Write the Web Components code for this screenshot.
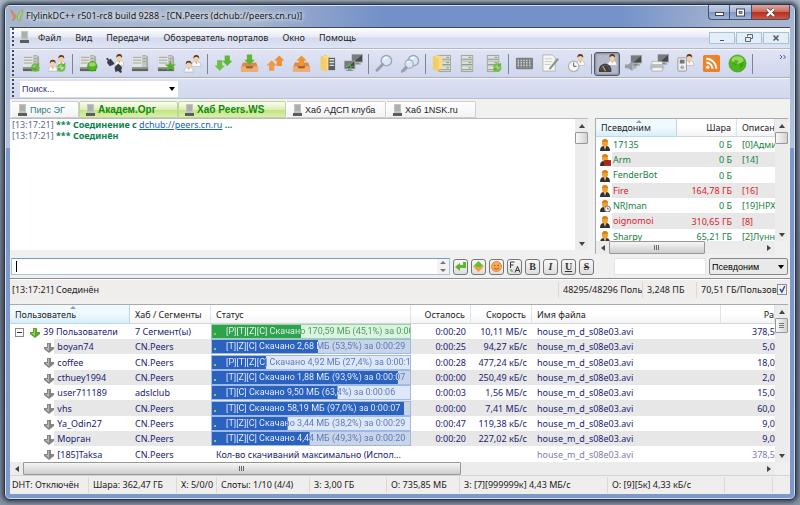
<!DOCTYPE html>
<html lang="ru"><head><meta charset="utf-8"><title>FlylinkDC++</title>
<style>
html,body{margin:0;height:100%}
body{font:9px/12px "Noto Sans",sans-serif;color:#1c1c1c;background:linear-gradient(#aab8c8,#8d99a8 25%,#6f7a8c 60%,#8391a6);overflow:hidden}
</style></head><body>
<app-window>
  <title-bar>FlylinkDC++ r501-rc8 build 9288 - [CN.Peers (dchub://peers.cn.ru)]</title-bar>
  <menu-bar></menu-bar>
  <tool-bar></tool-bar>
  <search-bar></search-bar>
  <tab-strip>
    <hub-tab style="--w:68px;--c:#2b7f8c">Пирс ЭГ</hub-tab>
    <hub-tab unread style="--w:99px">Академ.Орг</hub-tab>
    <hub-tab unread style="--w:108px">Хаб Peers.WS</hub-tab>
    <hub-tab style="--w:100px">Хаб АДСП клуба</hub-tab>
    <hub-tab style="--w:90px">Хаб 1NSK.ru</hub-tab>
  </tab-strip>
  <hub-view><chat-log></chat-log><user-list></user-list></hub-view>
  <message-bar></message-bar>
  <status-bar class="hub" cols="1fr 84px 54px 94px">
    <span>[13:17:21] Соединён</span><span>48295/48296 Поль</span><span>3,248 ПБ</span><span>70,51 ГБ/Пользов<input type="checkbox" checked aria-label="Показать пользователей"></span>
  </status-bar>
  <transfer-list></transfer-list>
  <status-bar cols="78px 88px 40px 93px 77px 73px 148px 117px 48px 1fr">
    <span>DHT: Отключён</span><span>Шара: 362,47 ГБ</span><span>Х: 5/0/0</span><span>Слоты: 1/10 (4/4)</span><span>З: 3,00 ГБ</span><span>О: 735,85 МБ</span><span>З: [7][999999к] 4,43 МБ/с</span><span>О: [9][5к] 4,33 кБ/с</span><span></span><span></span>
  </status-bar>
</app-window>
<script>
const server='<path d="M1 1h14l3 2v13H1z" fill="#a9aca9"/><path d="M1 1h11v14H1z" fill="#e3e5e2"/><path d="M2 3.500h9M2 6.500h9M2 9.500h9" stroke="#9da29d"/><path d="M12 2h4v12h-4z" fill="#c4c7c4"/><path d="M13 5h2M13 8h2" stroke="#8d918d"/><path d="M1 14h17v4H1z" fill="#5f645f"/><path d="M1 14h17v1.500H1z" fill="#9da19d"/>';
const head=(x,y)=>`<g transform="translate(${x} ${y})"><path d="M0 12q0-4 3-5h4q3 1 3 5z" fill="#fafafa" stroke="#aaa" stroke-width=".6"/><path d="M4 6h2v2l-1 2-1-2z" fill="#e2a878"/><ellipse cx="5" cy="4" rx="2.600" ry="3.400" fill="#f6cfa6"/><path d="M2 4Q1.500 0 5 0t3 4Q7 2 5 2T2 4z" fill="#5d3a20"/></g>`;
const refresh=(x,y)=>`<g transform="translate(${x} ${y})" fill="none" stroke="#6cc238" stroke-width="2.200"><path d="M1.500 5a3.500 3.500 0 0 1 6-2M8.500 5a3.500 3.500 0 0 1-6 2.500"/><path d="M9 0v4.500H4.500zM1 10V5.500h4.500z" fill="#5db62c" stroke="none"/></g>`;
const ball=(x,y,r)=>`<circle cx="${x}" cy="${y}" r="${r}" fill="#4fb51c" stroke="#389010" stroke-width=".6"/><ellipse cx="${x}" cy="${y-r*.4}" rx="${r*.7}" ry="${r*.45}" fill="#a8e36c" opacity=".8"/>`;
const screen=(x,y)=>`<g transform="translate(${x} ${y})"><path d="M0 0h12v9H0z" fill="#a5a8aa"/><path d="M1 1h10v7H1z" fill="#45494b"/><path d="M1 1h10L3 8H1z" fill="#777c7e"/><path d="M4 9h4v1h2v1H2v-1h2z" fill="#85898b"/></g>`;
const arrow=(x,y,c,s=1,up=1)=>`<path transform="translate(${x} ${y}) scale(${s} ${s*up})" d="M0-5l5 5H2.500v5h-5V0H-5z" fill="${c}"/>`;
const folder='<path d="M1 3l6-2v17l-6-2z" fill="#e6b94c"/><path d="M3 2h8v14H3z" fill="#f6dc86"/><path d="M1 3l6 2v14l-6-3z" fill="#f3cd69"/>';
const rack='<path d="M3 1h13v18H3z" fill="#a3a8a3"/><path d="M4 2h11v5H4zM4 8h11v4H4zM4 13h11v5H4z" fill="#dee1dd"/><path d="M4 5.500h11M4 11h11M4 16.500h11" stroke="#8b918b"/><path d="M11 3.500h3M11 9h3M11 14.500h3" stroke="#6cae4c"/>';
const tray='<path d="M3 9h14l2 5v4H1v-4z" fill="#d98b4c"/><path d="M1 13h5l1 2h6l1-2h5v6H1z" fill="#ecae78"/><path d="M6 13h8l-1 2H7z" fill="#9e5a27"/>';
const lens='<circle cx="12" cy="7" r="5.500" fill="#d6e7f5" stroke="#9aa8b4" stroke-width="1.500"/><path d="M9 6q1-3 4-2" stroke="#fff" stroke-width="1.500" fill="none"/><path d="M8 11l-6 6" stroke="#9a9da4" stroke-width="3" stroke-linecap="round"/>';
const person='<path d="M1 12q0-5 4-5h2q4 0 4 5z" fill="#33302e"/><path d="M5 7h2l-1 4z" fill="#fff"/><ellipse cx="6" cy="4" rx="3" ry="3.800" fill="#f0a030"/><path d="M3 3Q3 0 6 0t3 3z" fill="#d9801c"/>';
const ICONS={
 logo:[14,13,'<path d="M6 7Q0-1 1 2t3 6Q2 12 3 12t3-5z" fill="#f0985a" stroke="#b97040" stroke-width=".6"/><path d="M7 7q6-8 6-5t-3 6q2 4 0 4T7 7z" fill="#a8d66e" stroke="#69a03e" stroke-width=".6"/>'],
 doc:[9,12,'<path d="M1 0h7v9H1z" fill="#c3c5c3"/><path d="M2 2h5M2 4h5M2 6h5" stroke="#8d908d" stroke-width=".8"/><path d="M0 9h9v3H0z" fill="#5a5e5a"/>'],
 srvRef:[20,20,server+refresh(9,9)],
 usrRef:[20,20,head(9,1)+head(0,6)+refresh(9,9)],
 srvBall:[20,20,server+ball(14,13,5)],
 plug:[20,20,head(10,0)+'<g fill="#3a3e44"><path d="M1 5l2-1 1 2 2-1 4 5-1 1-4 2-3-4 1-2z"/><path d="M10 14l4-4 4 4-1 3 1 2-2 1-2-2-3 1z"/></g>'],
 srv:[20,20,server],
 srvStar:[20,20,server+'<path d="M14 7l1.500 4H20l-3.500 2.500L18 18l-4-2.500L10 18l1.500-4.500L8 11h4.500z" fill="#55b026"/>'],
 users:[20,20,head(9,1)+head(1,7)],
 downs:[20,20,arrow(6,12,'#6cc043',1.1,-1)+arrow(14,7,'#5fb638',1.1,-1)],
 trayDown:[20,20,tray+arrow(10,6,'#5eb533',1.1,-1)],
 ups:[20,20,arrow(6,12,'#ee9a48',1.1)+arrow(14,7,'#f0912f',1.1)],
 trayUp:[20,20,tray+arrow(10,7,'#f0942f',1.1)],
 door:[20,20,'<g transform="translate(2)">'+folder+'<path d="M9 4h7v13H9z" fill="#5b5e60"/><path d="M10 6h5M10 9h5M10 12h5" stroke="#d8dada" stroke-width="1.500"/></g>'],
 monitors:[20,20,screen(8,0)+screen(0,7)+'<path d="M2 13h3l1-3 1 5 1-2h3" stroke="#50c850" fill="none" stroke-width=".8"/>'],
 find:[20,20,lens],
 find2:[20,20,'<g transform="translate(1 0)">'+lens+'</g><g transform="translate(-1 5) scale(.8)">'+lens+'</g>'],
 folderRack:[20,20,'<g transform="translate(4 0)">'+rack+'</g>'+folder],
 rack:[20,20,rack],
 rackRef:[20,20,rack+refresh(9,9)],
 keys:[20,20,'<rect x="1" y="4" width="18" height="12" rx="1" fill="#7c8083"/><path d="M3.500 6v8M6.500 6v8M9.500 6v8M12.500 6v8M15.500 6v8" stroke="#cfd2d4" stroke-width="1.500" stroke-dasharray="1.500 1"/>'],
 note:[20,20,'<path d="M2 1h10l3 3v14H2z" fill="#f7f7f5" stroke="#b3b5b3"/><path d="M4 5h8M4 8h8M4 11h6" stroke="#c5c8c6"/><path d="M18 5L9 16" stroke="#8c9092" stroke-width="2.200"/>'],
 clock:[20,20,head(9,0)+'<circle cx="7" cy="13" r="5.500" fill="#f6f6f6" stroke="#b3b3b3" stroke-width="1.300"/><path d="M7 9v4h3" stroke="#555" fill="none"/>'],
 gauge:[20,20,head(10,0)+'<path d="M1 19q-1-8 6.500-9 7.500 1 6.500 9z" fill="#3c3f44"/><path d="M3 17q0-5 4.500-5t4.500 5" stroke="#5b5f65" fill="none"/><path d="M8 18l-3-5" stroke="#e29a3a" stroke-width="1.300"/>'],
 speaker:[20,20,screen(7,1)+'<path d="M1 11h3l5-3v10l-5-3H1z" fill="#9a9ea1"/><path d="M10.500 10v6M12.500 11v4" stroke="#80858a"/>'],
 printer:[20,20,screen(8,0)+'<path d="M2 8h11v3H2z" fill="#f8f8f8" stroke="#999" stroke-width=".6"/><path d="M0 11h15v5H0z" fill="#bcc0c2"/><path d="M2 14h11v4H2z" fill="#f2f2f2" stroke="#999" stroke-width=".6"/>'],
 player:[20,20,head(9,0)+'<rect x="2" y="4" width="9" height="14" rx="1" fill="#eee" stroke="#999"/><path d="M4 6h5v4H4z" fill="#6f7477"/><circle cx="6.500" cy="14" r="2" fill="#aeb1b3"/>'],
 rss:[20,20,'<rect x="1" y="1" width="18" height="18" rx="2" fill="#ee8325"/><circle cx="6" cy="14" r="1.800" fill="#fff"/><path d="M4.500 9a6.500 6.500 0 0 1 6.500 6.500M4.500 5a10.500 10.500 0 0 1 10.500 10.500" stroke="#fff" stroke-width="2" fill="none"/>'],
 globe:[20,20,ball(10,10,9)+'<path d="M5 9l3-3 3 1-1 3-3 2zM12 10l4-2v4l-3 3z" fill="#35960f" opacity=".6"/>'],
 person:[12,12,person],
 personRed:[12,12,person+'<path d="M5 6h7v6H5z" fill="#b8322a"/><path d="M5 8h7M5 10h7M8 6v2M9 8v2" stroke="#842019" stroke-width=".6"/>'],
 personClock:[12,12,person+'<circle cx="8.500" cy="9" r="3" fill="#eee" stroke="#777"/><path d="M8.500 7.500V9H10" stroke="#444" fill="none" stroke-width=".7"/>'],
 down:[10,10,'<path d="M3 0h4v4h3v2l-5 4-5-4V4h3z" fill="#5ba52a"/><path d="M4 1h1v7L1.500 5H4z" fill="#9bd45d"/>'],
 downGrey:[10,10,'<path d="M3 0h4v4h3v2l-5 4-5-4V4h3z" fill="#858585"/><path d="M4 1h1v7L1.500 5H4z" fill="#b9b9b9"/>'],
 enter:[11,11,'<path d="M8 1h3v6H5v3L0 6l5-4v2h3z" fill="#5fb52c"/>'],
 updown:[11,11,'<path d="M5.500 0L11 5.500H0z" fill="#69bd35"/><path d="M5.500 11L11 5.500H0z" fill="#f0a040"/><path d="M3 4h5v2H3z" fill="#69bd35"/>'],
 smile:[11,11,'<circle cx="5.500" cy="5.500" r="5" fill="#f6ac5c" stroke="#e28a34"/><circle cx="3.800" cy="4.500" r=".8" fill="#a85a1c"/><circle cx="7.200" cy="4.500" r=".8" fill="#a85a1c"/><path d="M3 7q2.500 2.500 5 0" stroke="#a85a1c" fill="none"/>']
};
const define=(name,html,setup)=>{const t=document.createElement('template');t.innerHTML=html;
 customElements.define(name,class extends HTMLElement{constructor(){super();this.attachShadow({mode:'open'})}
 connectedCallback(){if(this.ready)return;this.ready=1;this.shadowRoot.append(t.content.cloneNode(true));setup&&setup(this,this.shadowRoot)}})};

define('app-icon','<style>:host{display:inline-block;vertical-align:middle;line-height:0;flex:none}</style>',(el,r)=>{
 const [w,h,p]=ICONS[el.getAttribute('name')];const s=el.getAttribute('size')||w;
 r.innerHTML+=`<svg aria-hidden="true" width="${s}" height="${Math.round(h*s/w)}" viewBox="0 0 ${w} ${h}">${p}</svg>`});

define('app-window',`<style>:host{box-sizing:border-box;display:block;height:100vh;padding:4px 4px 5px}
 .frame{box-sizing:border-box;height:100%;display:flex;flex-direction:column;border:1px solid #25344f;border-radius:6px;padding:0 5px 5px;
 background:linear-gradient(90deg,transparent 30%,#7390c9 48%,#7592ca 78%,transparent 92%) top/100% 23px no-repeat,linear-gradient(#a5b4cc,#b3c3dd 29%,#7d98cb 29%);box-shadow:inset 0 0 0 1px #d5dfee,0 0 4px 2px #39414f}
 .client{flex:1;min-height:0;display:flex;flex-direction:column;background:#f0f0f0;border-top:1px solid #3b4863}
 ::slotted(title-bar){flex:none}</style>
 <div class="frame"><slot name="title"></slot><div class="client"><slot></slot></div></div>`,el=>{el.querySelector('title-bar').slot='title'});

define('title-bar',`<style>:host{display:flex;height:22px;align-items:flex-start;color:#101820}
 app-icon{margin:4px 2px 0 0} h1{flex:1;margin:5px 0 0;font:inherit;text-shadow:0 0 5px #fff,0 0 6px #fff}
 .b{display:flex} button{box-sizing:border-box;width:22px;height:15px;padding:0;border:1px solid #3f5270;border-top:0;border-left-width:0;background:linear-gradient(#c5d1e6,#a8b8d6 48%,#8097c2 50%,#a1b5d9);display:grid;place-items:center}
 button:first-child{border-left-width:1px;border-radius:0 0 0 4px} button:last-child{width:38px;border-radius:0 0 4px;background:linear-gradient(#dfa79e,#cc6a5c 48%,#b32f1e 50%,#d0553d)}</style>
 <app-icon name="logo"></app-icon><h1><slot></slot></h1><div class="b">
 <button aria-label="Свернуть"><svg width="11" height="9"><rect x="1.500" y="4.500" width="8" height="3" fill="#fff" stroke="#445"/></svg></button>
 <button aria-label="Развернуть"><svg width="11" height="9"><rect x="1.500" y="1" width="8" height="7" fill="#fff" stroke="#445"/><rect x="4" y="3.500" width="3" height="2" fill="#8fa2c8" stroke="#445" stroke-width=".7"/></svg></button>
 <button aria-label="Закрыть"><svg width="11" height="9"><path d="M2 1l7 7M9 1L2 8" stroke="#544" stroke-width="3.500"/><path d="M2 1l7 7M9 1L2 8" stroke="#fff" stroke-width="2.200"/></svg></button></div>`);

const grip='.grip{flex:none;width:2px;margin-left:2px;align-self:stretch;background:repeating-linear-gradient(#44485c 0 2px,transparent 2px 4px)}';
define('menu-bar',`<style>:host{display:flex;box-sizing:border-box;height:21px;align-items:center;background:linear-gradient(#fff,#e6e9f6 45%,#d4daee 50%,#dfe4f4);border-bottom:1px solid #b2b8cc}
 ${grip} app-icon{margin:0 2px 2px 6px} nav{display:flex;flex:1} nav button{border:0;background:none;font:inherit;color:#222;padding:0 7px}
 .w{display:flex;gap:1px;margin-right:1px}.w button{width:26px;height:12px;padding:0;border:1px solid #a9c3d4;background:#e3eef9;display:grid;place-items:center}</style>
 <i class="grip"></i><app-icon name="doc"></app-icon>
 <nav aria-label="Меню"><button>Файл</button><button>Вид</button><button>Передачи</button><button>Обозреватель порталов</button><button>Окно</button><button>Помощь</button></nav>
 <div class="w"><button aria-label="Свернуть окно"><svg width="8" height="8"><path d="M2 6.500h4" stroke="#555"/></svg></button><button aria-label="Восстановить окно"><svg width="8" height="8" fill="none" stroke="#666"><path d="M2.500 2.500v-2h5v4h-2M.500 3.500h5v4h-5z"/></svg></button><button aria-label="Закрыть окно"><svg width="8" height="8"><path d="M1.500 1.500l5 5M6.500 1.500l-5 5" stroke="#555" stroke-width="1.500"/></svg></button></div>`);

define('tool-bar',`<style>:host{display:flex;box-sizing:border-box;height:29px;align-items:center;background:linear-gradient(#e0e4f4,#cfd6ec);border-top:1px solid #f6f7fc;border-bottom:1px solid #a9b0c4}
 ${grip} .t{display:flex;align-items:center;margin-left:4px;flex:1} button{box-sizing:border-box;width:26px;height:24px;padding:0;border:0;background:none;display:grid;place-items:center}
 button[aria-pressed]{border:1px solid #505667;border-radius:3px;background:#b4bac9;box-shadow:inset 0 0 2px 1px #868c9c}
 i.s{width:5px;height:20px;background:linear-gradient(#7e8496,#7e8496) 2px 0/1px 100% no-repeat} .m{align-self:flex-start;width:14px;height:14px}</style>
 <i class="grip"></i><div class="t" role="toolbar" aria-label="Панель инструментов"></div><button class="m" aria-label="Ещё"><svg width="8" height="6" fill="none" stroke="#4d55b0"><path d="M1 1l2 2-2 2M4.500 1l2 2-2 2"/></svg></button>`,(el,r)=>{
 r.querySelector('.t').innerHTML='srvRef usrRef | srvBall plug srv srvStar users | downs trayDown ups trayUp door monitors | find find2 | folderRack rack rackRef | keys note clock | gauge speaker printer player rss globe |'.split(' ').map(n=>n=='|'?'<i class="s"></i>':`<button aria-label="${n}"${n=='gauge'?' aria-pressed="true"':''}><app-icon name="${n}" size="19"></app-icon></button>`).join('')});

const sel='select{appearance:none;box-sizing:border-box;border:0;border-radius:0;font:inherit;padding:0 14px 0 2px;background:#fff url("data:image/svg+xml,%3Csvg xmlns=\'http://www.w3.org/2000/svg\' width=\'6\' height=\'4\'%3E%3Cpath d=\'M0 0h6L3 4z\'/%3E%3C/svg%3E") right 3px center no-repeat}';
define('search-bar',`<style>:host{display:flex;box-sizing:border-box;height:21px;align-items:center;background:linear-gradient(#dbe0f2,#d2d9ee);border-top:1px solid #f6f7fc;border-bottom:1px solid #b9bfd0}
 ${grip} ${sel} select{width:158px;height:16px;margin-left:6px;color:#33337a;font:9px "Liberation Sans",sans-serif}</style><i class="grip"></i><select aria-label="Поиск"><option>Поиск...</option></select>`);

define('tab-strip','<style>:host{display:flex;height:19px;padding:2px 1px 0;box-sizing:border-box;background:#f1f1f0}</style><slot></slot>',el=>el.setAttribute('role','tablist'));
define('hub-tab',`<style>:host{display:block;width:var(--w);flex:none} button{box-sizing:border-box;width:100%;height:17px;display:flex;align-items:center;gap:3px;padding:0 0 0 6px;border:1px solid #cfcfcf;border-left-color:#fff;border-radius:2px 2px 0 0;background:linear-gradient(#fff,#f3f3f3);font:9px "Liberation Sans",sans-serif;color:var(--c,#222);white-space:nowrap}
 :host([unread]) button{background:linear-gradient(#fbfdf5,#dcefb4 50%,#c3e482 55%,#d9efad);border-color:#c0d59a;font:bold 10px "Liberation Sans",sans-serif;color:#118a11}</style><button role="tab"><app-icon name="doc"></app-icon><slot></slot></button>`);

define('scroll-bar',`<style>:host{display:flex;flex:none;flex-direction:column;width:13px;background:#ececec} :host([h]){flex-direction:row;width:auto;height:13px}
 button{flex:none;width:13px;height:13px;padding:0;border:0;background:none;display:grid;place-items:center}
 .tr{flex:1;display:flex;flex-direction:inherit} .th{box-sizing:border-box;border:1px solid #979797;border-radius:1px;height:var(--t,12px);background:linear-gradient(90deg,#f8f8f8,#d2d2d2)}
 :host([grip]) .th{background:repeating-linear-gradient(#777 0 1px,transparent 1px 2px) center/5px 5px no-repeat,linear-gradient(90deg,#f8f8f8,#d2d2d2)}
 :host([h]) .th{height:auto;width:var(--t);background:repeating-linear-gradient(90deg,#666 0 1px,transparent 1px 2px) center/6px 5px no-repeat,linear-gradient(#f6f6f6,#e2e2e2 48%,#cdcdcd)}
 svg{transform:rotate(var(--r,0deg))} :host([h]) svg{--r:-90deg} :host([h]) button:last-child svg{--r:90deg} :host(:not([h])) button:last-child svg{--r:180deg}</style>
 <button aria-label="Назад"><svg width="6" height="4"><path d="M0 4h6L3 0z" fill="#444"/></svg></button><div class="tr"><div class="th"></div></div><button aria-label="Вперёд"><svg width="6" height="4"><path d="M0 4h6L3 0z" fill="#444"/></svg></button>`);

define('hub-view','<style>:host{display:flex;flex:none;gap:7px;height:136px;padding:0 2px 0 0}::slotted(chat-log){flex:1;margin-bottom:4px}::slotted(user-list){width:193px}</style><slot></slot>');
define('chat-log',`<style>:host{display:flex;min-width:0;background:#fff;border-top:1px solid #bbb}.l{flex:1;padding:0 2px} p{margin:0;line-height:11px;color:#5b6b92} b{color:#0a8250} a{color:#1565b8}</style>
 <div class="l" role="log"><p>[13:17:21] <b>*** Соединение с </b> <a href="dchub://peers.cn.ru">dchub://peers.cn.ru</a> <b>...</b></p><p>[13:17:21] <b>*** Соединён</b></p></div><scroll-bar></scroll-bar>`);

const tbl=`table{border-collapse:separate;border-spacing:0;table-layout:fixed;width:100%} th,td{box-sizing:border-box;padding:0 5px;height:15px;line-height:13px;overflow:hidden;white-space:nowrap;text-align:left;font-weight:400} .r{text-align:right}
 tbody tr:nth-child(3n) td{height:16px} th{background:linear-gradient(#fff 50%,#f3f4f6);border-right:1px solid #dfe3ea;border-bottom:1px solid #d5d5d5;color:#222}
 th:first-child{background:linear-gradient(#f0f9fd 50%,#d9eef8);border-color:#b5dcee;position:relative} th:first-child:after{content:"";position:absolute;top:1px;left:50%;border:3px solid transparent;border-top:0;border-bottom:3px solid #7fa6b8}
 tbody tr:nth-child(even) td{background:#e7e7e7} .r:last-child{padding-right:0}`;
define('user-list',`<style>:host{display:flex;min-width:0;border-top:1px solid #aaa;border-left:1px solid #aaa;box-sizing:border-box}.m{flex:1;min-width:0;display:flex;flex-direction:column}.c{flex:1;min-height:0;overflow:hidden;background:#fff}
 ${tbl} th{height:18px;line-height:16px} td:nth-child(3),th:nth-child(3){padding-right:0} td:first-child{padding:0 0 0 3px} tbody tr:nth-child(even) td:first-child{background:linear-gradient(90deg,#fff 16px,#e7e7e7 16px)} td:first-child app-icon{margin-right:2px}
 tr{color:#158043} tr.x{color:#d8202c} .v{display:flex;flex-direction:column} .v scroll-bar{flex:1;margin-bottom:13px}</style>
 <div class="m"><div class="c"><table><colgroup><col style="width:81px"><col style="width:60px"><col></colgroup><thead><tr><th>Псевдоним</th><th class="r">Шара</th><th>Описан</th></tr></thead><tbody></tbody></table></div><scroll-bar h style="--t:96px"></scroll-bar></div><div class="v"><scroll-bar></scroll-bar></div>`,(el,r)=>{
 r.querySelector('tbody').innerHTML=[['17135','0 Б','[0]Адми'],['Arm','0 Б','[14]','','personRed'],['FenderBot','0 Б',''],['Fire','164,78 ГБ','[16]','x'],['NRJman','0 Б','[19]НРХ','','personClock'],['oignomoi','310,65 ГБ','[8]','x'],['Sharpy','65,21 ГБ','[2]Лунн']].map(a=>`<tr class="${a[3]||''}"><td><app-icon name="${a[4]||'person'}"></app-icon>${a[0]}</td><td class="r">${a[1]}</td><td>${a[2]}</td></tr>`).join('')});

define('message-bar',`<style>:host{display:flex;flex:none;box-sizing:border-box;height:25px;padding:4px 2px 3px 1px;align-items:stretch;border-bottom:1px solid #8f8f8f}
 .box{flex:1;display:flex;border:1px solid #a9c5dd;border-top-color:#6f9dc4;background:#fff;min-width:0} .box input{flex:1;min-width:0;border:0;padding:0 4px;font:inherit;outline:0;background:linear-gradient(#000,#000) 4px 2px/1px 11px no-repeat}
 .sp{width:12px;display:grid;place-items:center;background:#f3f3f3} .bs{display:flex;gap:3px;margin:0 20px 0 3px;align-items:center} button{box-sizing:border-box;width:15px;height:16px;padding:0;border:1px solid #777;border-radius:3px;background:linear-gradient(#f8f8f8,#dedede);font:bold 10px/12px "Liberation Serif",serif;color:#333;display:grid;place-items:center}
 .f{box-sizing:border-box;width:92px;border:1px solid #e4e4e4;background:#fff;margin-right:3px} ${sel} select{width:79px;border:1px solid #888;border-radius:2px;font:9px "Liberation Sans",sans-serif;background-color:#e9e9e9}</style>
 <div class="box"><input aria-label="Сообщение"><span class="sp"><svg width="6" height="11"><path d="M0 3h6L3 0zM0 8h6L3 11z" fill="#777"/></svg></span></div>
 <div class="bs"><button aria-label="Отправить"><app-icon name="enter"></app-icon></button><button aria-label="Многострочно"><app-icon name="updown"></app-icon></button><button aria-label="Смайлы"><app-icon name="smile"></app-icon></button><button aria-label="Транслит"><svg width="12" height="12" stroke="#333" fill="none"><path d="M1.500 7V1h4M1.500 4h3M6 11.500l2.500-6 2.500 6M7 9.500h3"/><path d="M2 8v2h2" stroke="#4a9c2c"/></svg></button><button>B</button><button><i>I</i></button><button><u>U</u></button><button><s>S</s></button></div>
 <input class="f" aria-label="Фильтр"><select aria-label="Поле фильтра"><option>Псевдоним</option></select>`);

define('status-bar',`<style>:host{display:grid;flex:none;box-sizing:border-box;height:19px;align-items:center;background:#f0eded;border-top:1px solid #d4d4d4} :host(.hub){border-top-color:#fff;height:20px;margin-bottom:5px}
 ::slotted(span){display:flex;justify-content:space-between;align-items:center;height:16px;padding-left:4px;border-left:1px solid #dcd8d8;white-space:nowrap;overflow:hidden} ::slotted(span:first-child){border:0;padding-left:2px}</style><slot></slot>`,el=>{el.style.gridTemplateColumns=el.getAttribute('cols');const c=el.querySelector('input');if(c)c.style.cssText='margin:0 3px 0 0;width:11px;height:11px;appearance:none;border:1px solid #8b8f94;background:#eef2fb url("data:image/svg+xml,%3Csvg xmlns=\'http://www.w3.org/2000/svg\' width=\'9\' height=\'9\'%3E%3Cpath d=\'M2 4l2 3 3-6\' fill=\'none\' stroke=\'%23304a8c\' stroke-width=\'1.500\'/%3E%3C/svg%3E")'});

define('transfer-bar',`<style>:host{display:block;height:15px;--f:#2b62bf;--t:#5578b6;--e:#dfe8f8;color:#fff} :host([g]){--f:#2fa24c;--t:#3f9a58;--e:#dcf3e0} :host([z]){--e:#c9d4e8}
 div{box-sizing:border-box;height:15px;border:1px solid #9db9e4;background:linear-gradient(var(--f),var(--f)) 0/var(--p) 100% no-repeat var(--e);overflow:hidden;position:relative} :host([g]) div{border-color:#9ad3a6}
 div:before{content:"";position:absolute;left:2px;bottom:3px;width:2px;height:2px;background:#8fd04c}
 span{display:block;padding-left:14px;font:9px/13px Roboto,sans-serif;white-space:nowrap;background:linear-gradient(90deg,#f4f8ff var(--p),var(--t) var(--p));-webkit-background-clip:text;background-clip:text;color:transparent}</style><div><span><slot></slot></span></div>`,el=>el.style.setProperty('--p',el.getAttribute('p')+'%'));

define('transfer-list',`<style>:host{display:flex;flex:1;min-height:0;border-top:1px solid #aaa;margin-right:2px}.m{flex:1;min-width:0;display:flex;flex-direction:column}.c{flex:1;min-height:0;overflow:hidden;background:#fff}
 ${tbl} th{height:19px;line-height:17px} tbody{color:#1b1b74} td:first-child{padding:0 0 0 34px} td:first-child app-icon{margin-right:1px} tbody tr:first-child td:first-child{padding-left:5px} tbody tr:nth-child(even) td:first-child{background:linear-gradient(90deg,#fff 44px,#e7e7e7 44px)}
 td.b{padding:0} tr:last-child td:nth-child(n+6){color:#7d7daf} .e{display:inline-grid;place-items:center;vertical-align:middle;width:9px;height:9px;box-sizing:border-box;padding:0;border:1px solid #888;background:#fff;margin-right:6px} .e:after{content:"";width:5px;height:1px;background:#333} .v{display:flex;flex-direction:column} .v scroll-bar{flex:1;margin-bottom:13px}</style>
 <div class="m"><div class="c"><table><colgroup><col style="width:120px"><col style="width:81px"><col style="width:200px"><col style="width:60px"><col style="width:61px"><col><col style="width:54px"></colgroup><thead><tr><th>Пользователь</th><th>Хаб / Сегменты</th><th>Статус</th><th class="r">Осталось</th><th class="r">Скорость</th><th>Имя файла</th><th class="r">Ра</th></tr></thead><tbody></tbody></table></div><scroll-bar h style="--t:438px"></scroll-bar></div><div class="v"><scroll-bar grip style="--t:15px"></scroll-bar></div>`,(el,r)=>{
 const S='Скачано ';
 r.querySelector('tbody').innerHTML=[['39 Пользователи','7 Сегмент(ы)','[P][T][Z][C] '+S+'170,59 МБ (45,1%) за 0:00',45.1,'0:00:20','10,11 МБ/с','378,5'],['boyan74','CN.Peers','[T][Z][C] '+S+'2,68 МБ (53,5%) за 0:00:29',53.5,'0:00:25','94,27 кБ/с','5,0'],['coffee','CN.Peers','[P][T][Z][C] '+S+'4,92 МБ (27,4%) за 0:00:1',27.4,'0:00:28','477,24 кБ/с','18,0'],['cthuey1994','CN.Peers','[T][Z][C] '+S+'1,88 МБ (93,9%) за 0:00:07',93.9,'0:00:00','250,49 кБ/с','2,0'],['user711189','adslclub','[T][C] '+S+'9,50 МБ (63,4%) за 0:00:06',63.4,'0:00:03','1,56 МБ/с','15,0'],['vhs','CN.Peers','[T][C] '+S+'58,19 МБ (97,0%) за 0:00:07',97,'0:00:00','7,41 МБ/с','60,0'],['Ya_Odin27','CN.Peers','[T][Z][C] '+S+'3,44 МБ (38,2%) за 0:00:29',38.2,'0:00:47','119,38 кБ/с','9,0'],['Морган','CN.Peers','[T][Z][C] '+S+'4,44 МБ (49,3%) за 0:00:20',49.3,'0:00:20','227,02 кБ/с','9,0'],['[185]Taksa','CN.Peers','Кол-во скачиваний максимально (Испол...',0,'','','378,5']].map((a,i)=>`<tr><td>${i?'':'<button class="e" aria-label="Свернуть группу"></button>'}<app-icon name="${i?'downGrey':'down'}"></app-icon> ${a[0]}</td><td>${a[1]}</td><td${a[3]?' class="b"':''}>${a[3]?`<transfer-bar p="${a[3]}" ${i?'':'g'} ${i%2?'z':''}>${a[2]}</transfer-bar>`:a[2]}</td><td class="r">${a[4]}</td><td class="r">${a[5]}</td><td>house_m_d_s08e03.avi</td><td class="r">${a[6]}</td></tr>`).join('')});
</script></body></html>
